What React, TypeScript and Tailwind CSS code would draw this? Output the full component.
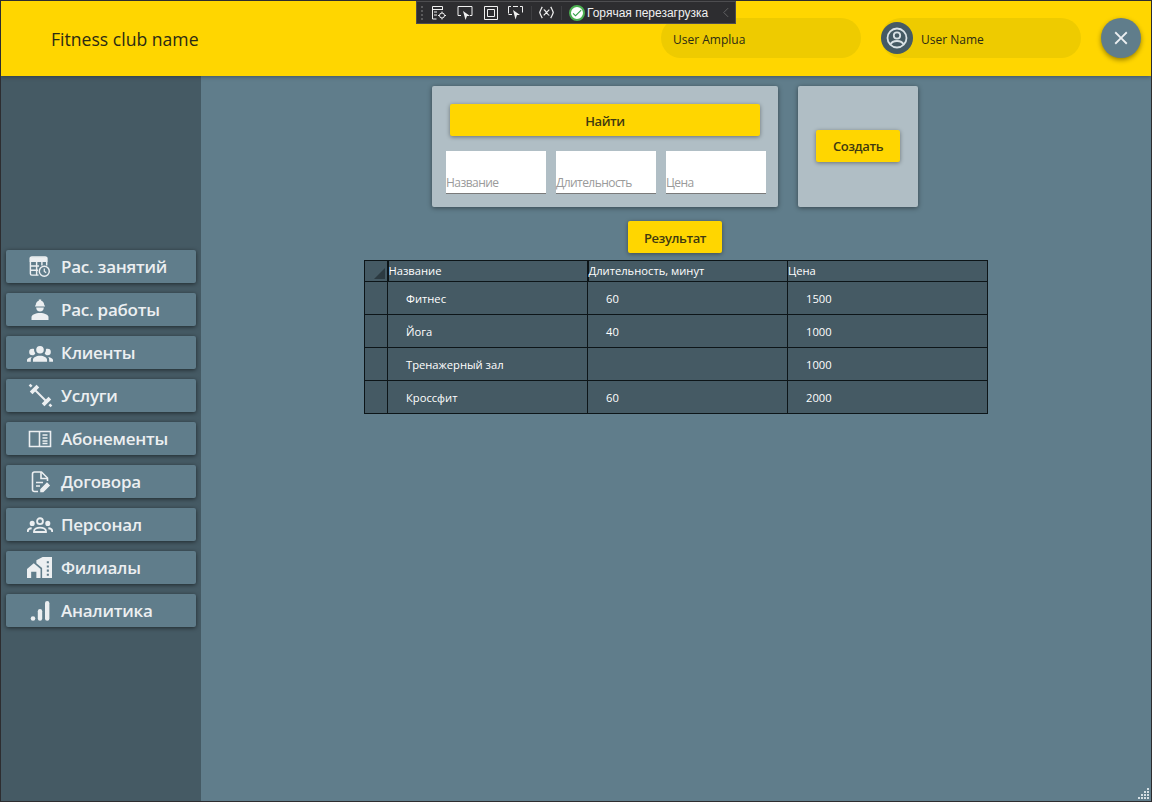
import React from "react";
import { MdClose, MdCheck } from "react-icons/md";

const FONT = "font-['Open_Sans','Noto_Sans',sans-serif]";

const IconSchedule = () => (
  <svg viewBox="0 0 24 24" className="w-[23px] h-[23px] -ml-[2px]" fill="none" stroke="currentColor" strokeWidth="1.500">
    <path d="M11 21H4A1.500 1.500 0 0 1 2.500 19.500V3.500A1.500 1.500 0 0 1 4 2h14a1.500 1.500 0 0 1 1.500 1.500V11" />
    <path d="M2.500 3h17v3.500h-17z" fill="currentColor" />
    <path d="M2.500 11.500h9M2.500 16h8M9 7v14M14.500 7v4" />
    <circle cx="17" cy="17" r="5.200" />
    <path d="M17 14.200v3l2 1.200" strokeWidth="1.300" />
  </svg>
);

const IconWorker = () => (
  <svg viewBox="0 0 24 24" className="w-[24px] h-[24px]" fill="currentColor">
    <path d="M12 15c-4.400 0-8.500 1.700-8.500 4v3h17v-3c0-2.300-4.100-4-8.500-4Z" />
    <path d="M8.200 9.500h7.600c0 2.400-1.600 4-3.800 4s-3.800-1.600-3.800-4Z" />
    <path d="M7.700 7.500C7.700 5 9.200 3.300 10.800 2.800V1.500h2.400v1.300c1.600.5 3.100 2.200 3.100 4.700h.7v1H7v-1h.7Z" />
  </svg>
);

const IconGroup = () => (
  <svg viewBox="0 0 24 24" className="w-[26px] h-[26px]" fill="currentColor">
    <path d="M12,5.5A3.5,3.5 0 0,1 15.5,9A3.5,3.5 0 0,1 12,12.5A3.5,3.5 0 0,1 8.5,9A3.5,3.5 0 0,1 12,5.5M5,8C5.56,8 6.08,8.15 6.53,8.42C6.38,9.85 6.8,11.27 7.66,12.38C7.16,13.34 6.16,14 5,14A3,3 0 0,1 2,11A3,3 0 0,1 5,8M19,8A3,3 0 0,1 22,11A3,3 0 0,1 19,14C17.84,14 16.84,13.34 16.34,12.38C17.2,11.27 17.62,9.85 17.47,8.42C17.92,8.15 18.44,8 19,8M5.5,18.25C5.5,16.18 8.41,14.5 12,14.5C15.59,14.5 18.5,16.18 18.5,18.25V20H5.5V18.25M0,20V18.5C0,17.11 1.89,15.94 4.45,15.6C3.86,16.28 3.5,17.22 3.5,18.25V20H0M24,20H20.5V18.25C20.5,17.22 20.14,16.28 19.55,15.6C22.11,15.94 24,17.11 24,18.5V20Z" />
  </svg>
);

const IconGroupOutline = () => (
  <svg viewBox="0 0 24 24" className="w-[26px] h-[26px]" fill="none" stroke="currentColor" strokeWidth="1.700">
    <circle cx="12" cy="8.500" r="2.700" />
    <circle cx="4.800" cy="10.500" r="1.500" fill="currentColor" />
    <circle cx="19.200" cy="10.500" r="1.500" fill="currentColor" />
    <path d="M6.500 18.500v-.8c0-2 2.500-3.300 5.500-3.300s5.500 1.300 5.500 3.300v.8Z" />
    <path d="M.8 18.500v-1c0-1.400 1.500-2.300 3.500-2.500M23.200 18.500v-1c0-1.400-1.500-2.300-3.500-2.500" />
  </svg>
);

const IconDumbbell = () => (
  <svg viewBox="0 0 24 24" className="w-[25px] h-[25px]" fill="none" stroke="currentColor" strokeLinecap="butt">
    <path d="M6 6 18 18" strokeWidth="1.900" />
    <path d="M9.500 3 3 9.500" strokeWidth="3.600" />
    <path d="M21 14.500 14.500 21" strokeWidth="3.600" />
    <path d="M3.500 3.500 1.500 1.500" strokeWidth="2.400" />
    <path d="M20.500 20.500 22.500 22.500" strokeWidth="2.400" />
  </svg>
);

const IconBook = () => (
  <svg viewBox="0 0 24 24" className="w-[24px] h-[24px]" fill="none" stroke="currentColor" strokeWidth="1.600">
    <path d="M1.500 4.500h21v15h-21z" />
    <path d="M11.500 4.500v15" />
    <path d="M14.500 8h5M14.500 11h5M14.500 14h5M14.500 16.500h5" strokeWidth="1.300" />
  </svg>
);

const IconContract = () => (
  <svg viewBox="0 0 24 24" className="w-[24px] h-[24px]" fill="none" stroke="currentColor" strokeWidth="1.600">
    <path d="M10 21.500H6.500A2 2 0 0 1 4.500 19.500V4A2 2 0 0 1 6.500 2h7l6 6v3" strokeLinejoin="round" />
    <path d="M13 2v6.500h6.500" />
    <path d="M8 12.500h7M8 16h4" />
    <path d="M13 21.500v-2l6-6 2 2-6 6Z" fill="currentColor" />
  </svg>
);

const IconCity = () => (
  <svg viewBox="0 0 24 24" className="w-[25px] h-[25px] -ml-[2px]" fill="currentColor">
    <path d="M0 13.500 6.500 8 13 13.500V22H9v-6H4v6H0Z" />
    <path d="M9 5 15 2h9v20h-9.500V12.500L9 8Z" />
    <path d="M19 6h2v2h-2zM19 10h2v2h-2zM19 14h2v2h-2zM19 18h2v2h-2z" fill="#607d8b" />
  </svg>
);

const IconBars = () => (
  <svg viewBox="0 0 24 24" className="w-[24px] h-[24px]" fill="currentColor">
    <circle cx="5" cy="19.500" r="2.300" />
    <rect x="9.800" y="10" width="4.400" height="11.800" rx="2.200" />
    <rect x="17" y="2" width="4.400" height="19.800" rx="2.200" />
  </svg>
);

const NAV_ITEMS: { label: string; icon: React.ReactNode }[] = [
  { label: "Рас. занятий", icon: <IconSchedule /> },
  { label: "Рас. работы", icon: <IconWorker /> },
  { label: "Клиенты", icon: <IconGroup /> },
  { label: "Услуги", icon: <IconDumbbell /> },
  { label: "Абонементы", icon: <IconBook /> },
  { label: "Договора", icon: <IconContract /> },
  { label: "Персонал", icon: <IconGroupOutline /> },
  { label: "Филиалы", icon: <IconCity /> },
  { label: "Аналитика", icon: <IconBars /> },
];

const ROWS = [
  { name: "Фитнес", duration: "60", price: "1500" },
  { name: "Йога", duration: "40", price: "1000" },
  { name: "Тренажерный зал", duration: "", price: "1000" },
  { name: "Кроссфит", duration: "60", price: "2000" },
];

const YellowButton = ({ children, className }: { children: string; className: string }) => (
  <button className={`h-[32px] pt-[3px] bg-[#ffd600] rounded-[2px] shadow-[0_1px_4px_rgba(0,0,0,0.4)] text-[13px] font-semibold tracking-[-0.4px] text-[#3f3a10] ${className}`}>
    {children}
  </button>
);

const Field = ({ label }: { label: string }) => (
  <div className="w-[100px] h-[43px] bg-white border-b border-[#7a7a7a] flex items-end pb-[2px] text-[12px] leading-[16px] tracking-[-0.55px] text-[#9a9a9a]">
    {label}
  </div>
);

const DevToolbar = () => (
  <div className="absolute z-20 left-[415px] top-0 w-[320px] h-[23px] bg-[#2d2d30] border border-[#4d4d50] flex items-center text-[#f0f0f0] font-['Liberation_Sans',sans-serif]">
    <div className="w-[5px] h-[14px] ml-[4px] border-l-2 border-dotted border-[#5a5a5c]" />
    <svg viewBox="0 0 16 16" className="w-[16px] h-[16px] ml-[5px]" fill="none" stroke="currentColor">
      <path d="M1.500 7V1.500h10V5M1.500 4.500h10M3 7h3M3 10h3M1.500 7v7h4" />
      <circle cx="11" cy="10.500" r="2.500" />
      <path d="M11 6.500v1.500M11 13v1.500M7 10.500h1.500M13.500 10.500H15" />
    </svg>
    <svg viewBox="0 0 16 16" className="w-[16px] h-[16px] ml-[10px]" fill="none" stroke="currentColor">
      <path d="M4 10.500H1V1.500h14v9h-2" />
      <path d="M6 6l7 5h-3l-1.500 4Z" fill="currentColor" stroke="none" />
    </svg>
    <svg viewBox="0 0 16 16" className="w-[16px] h-[16px] ml-[10px]" fill="none" stroke="currentColor">
      <path d="M1.500 1.500h13v13h-13zM4.500 4.500h7v7h-7z" />
    </svg>
    <svg viewBox="0 0 16 16" className="w-[16px] h-[16px] ml-[8px]" fill="none" stroke="currentColor">
      <path d="M4 1.500H1.500v7M5 9.500H1.500M6 1.500h5M13 1.500h2.500v6" />
      <path d="M6 5l7 5h-3l-1.500 4.500Z" fill="currentColor" stroke="none" />
    </svg>
    <div className="w-px h-[14px] bg-[#3f3f42] ml-[8px]" />
    <svg viewBox="0 0 16 16" className="w-[15px] h-[15px] ml-[7px]" fill="none" stroke="currentColor" strokeWidth="1.300">
      <path d="M3.500 2C2 5 1.500 5.500.8 8c.7 2.500 1.200 3 2.700 6M12.500 2c1.500 3 2 3.500 2.700 6-.7 2.500-1.200 3-2.700 6" />
      <path d="M5 11l6-6M5 5c2 0 4 6 6 6" />
    </svg>
    <div className="w-px h-[14px] bg-[#3f3f42] ml-[7px]" />
    <div className="w-[16px] h-[16px] ml-[7px] rounded-full bg-white border-2 border-[#4caf50] flex items-center justify-center text-[#2f9e44]">
      <MdCheck size={12} />
    </div>
    <span className="ml-[2px] text-[12px] leading-none whitespace-nowrap">Горячая перезагрузка</span>
    <svg viewBox="0 0 8 12" className="w-[7px] h-[11px] ml-[14px]" fill="none" stroke="#6a6a6c">
      <path d="M7 1 2 6l5 5" />
    </svg>
  </div>
);

const ResizeGrip = () => (
  <div className="absolute right-[2px] bottom-[2px] grid grid-cols-[repeat(4,2px)] gap-px">
    {[0, 0, 0, 1, 0, 0, 1, 1, 0, 1, 1, 1, 1, 1, 1, 1].map((on, i) => (
      <div key={i} className={`w-[2px] h-[2px] ${on ? "bg-[#d5dfe4]" : ""}`} />
    ))}
  </div>
);

export default function App() {
  return (
    <div className={`relative w-[1152px] h-[802px] border border-[#2d2d30] bg-[#607d8b] flex flex-col overflow-hidden ${FONT}`}>
      <header className="h-[75px] shrink-0 bg-[#ffd600] flex items-center pl-[50px] pr-[10px] shadow-[0_1px_4px_rgba(0,0,0,0.3)] z-10">
        <span className="text-[17.6px] pt-px text-[#2b2a14]">Fitness club name</span>
        <div className="ml-auto flex items-center -mt-px">
          <div className="w-[200px] h-[40px] rounded-[20px] bg-[#eecb00] flex items-center pl-[12px] pt-[3px] text-[12px] text-[#2b2a14]">
            User Amplua
          </div>
          <div className="w-[200px] h-[40px] ml-[20px] rounded-[20px] bg-[#eecb00] flex items-center text-[12px] text-[#2b2a14]">
            <div className="w-[32px] h-[32px] rounded-full bg-[#455a64] flex items-center justify-center text-[#d9e1e5]">
              <svg viewBox="0 0 24 24" className="w-[24px] h-[24px]" fill="none" stroke="currentColor" strokeWidth="1.800">
                <circle cx="12" cy="12" r="9.500" />
                <circle cx="12" cy="9.500" r="3.200" />
                <path d="M5.500 18.500c1-2.500 3.500-3.500 6.500-3.500s5.500 1 6.500 3.500" />
              </svg>
            </div>
            <span className="ml-[8px] pt-[3px]">User Name</span>
          </div>
          <button className="w-[40px] h-[40px] ml-[20px] rounded-full bg-[#607d8b] shadow-[0_2px_5px_rgba(0,0,0,0.4)] flex items-center justify-center text-[#eceff1]">
            <MdClose size={22} />
          </button>
        </div>
      </header>

      <div className="flex-1 flex min-h-0">
        <aside className="w-[200px] shrink-0 bg-[#455a64] flex flex-col justify-center gap-[10px] pl-[5px] pr-[5px]">
          {NAV_ITEMS.map((item) => (
            <button
              key={item.label}
              className="h-[33px] rounded-[2px] bg-[#607d8b] shadow-[0_1px_4px_rgba(0,0,0,0.55)] flex items-center text-[#eceff1] text-[17px] font-semibold tracking-[-0.25px]"
            >
              <span className="w-[55px] shrink-0 pl-[17px] flex justify-center pr-[4px]">{item.icon}</span>
              <span className="whitespace-nowrap">{item.label}</span>
            </button>
          ))}
        </aside>

        <main className="flex-1 flex flex-col items-center pt-[10px] pr-[2px]">
          <div className="flex gap-[20px]">
            <section className="w-[346px] h-[121px] rounded-[2px] bg-[#b0bec5] shadow-[0_1px_5px_rgba(0,0,0,0.45)] flex flex-col pt-[18px] pl-[14px]">
              <YellowButton className="w-[310px] ml-[4px]">Найти</YellowButton>
              <div className="flex gap-[10px] mt-[15px]">
                <Field label="Название" />
                <Field label="Длительность" />
                <Field label="Цена" />
              </div>
            </section>
            <section className="w-[120px] h-[121px] rounded-[2px] bg-[#b0bec5] shadow-[0_1px_5px_rgba(0,0,0,0.45)] flex items-center justify-center pb-[2px]">
              <YellowButton className="w-[84px]">Создать</YellowButton>
            </section>
          </div>

          <YellowButton className="w-[94px] mt-[14px]">Результат</YellowButton>

          <table className="mt-[7px] ml-[2px] w-[624px] table-fixed border-collapse bg-[#455a64] text-white text-[11.2px]">
            <thead>
              <tr className="h-[21px]">
                <th className="w-[23px] border border-[#0d1518] border-r-2 relative">
                  <span className="absolute right-[2px] bottom-[2px] w-0 h-0 border-l-[11px] border-l-transparent border-b-[11px] border-b-[#2c3a41]" />
                </th>
                <th className="w-[200px] border border-[#0d1518] border-r-2 text-left font-normal pt-px">Название</th>
                <th className="w-[200px] border border-[#0d1518] text-left font-normal pt-px">Длительность, минут</th>
                <th className="w-[200px] border border-[#0d1518] text-left font-normal pt-px">Цена</th>
              </tr>
            </thead>
            <tbody>
              {ROWS.map((row) => (
                <tr key={row.name} className="h-[33px]">
                  <td className="border border-[#0d1518]" />
                  <td className="border border-[#0d1518] pl-[18px] pt-[2px]">{row.name}</td>
                  <td className="border border-[#0d1518] pl-[18px] pt-[2px]">{row.duration}</td>
                  <td className="border border-[#0d1518] pl-[18px] pt-[2px]">{row.price}</td>
                </tr>
              ))}
            </tbody>
          </table>
        </main>
      </div>

      <DevToolbar />
      <ResizeGrip />
    </div>
  );
}
